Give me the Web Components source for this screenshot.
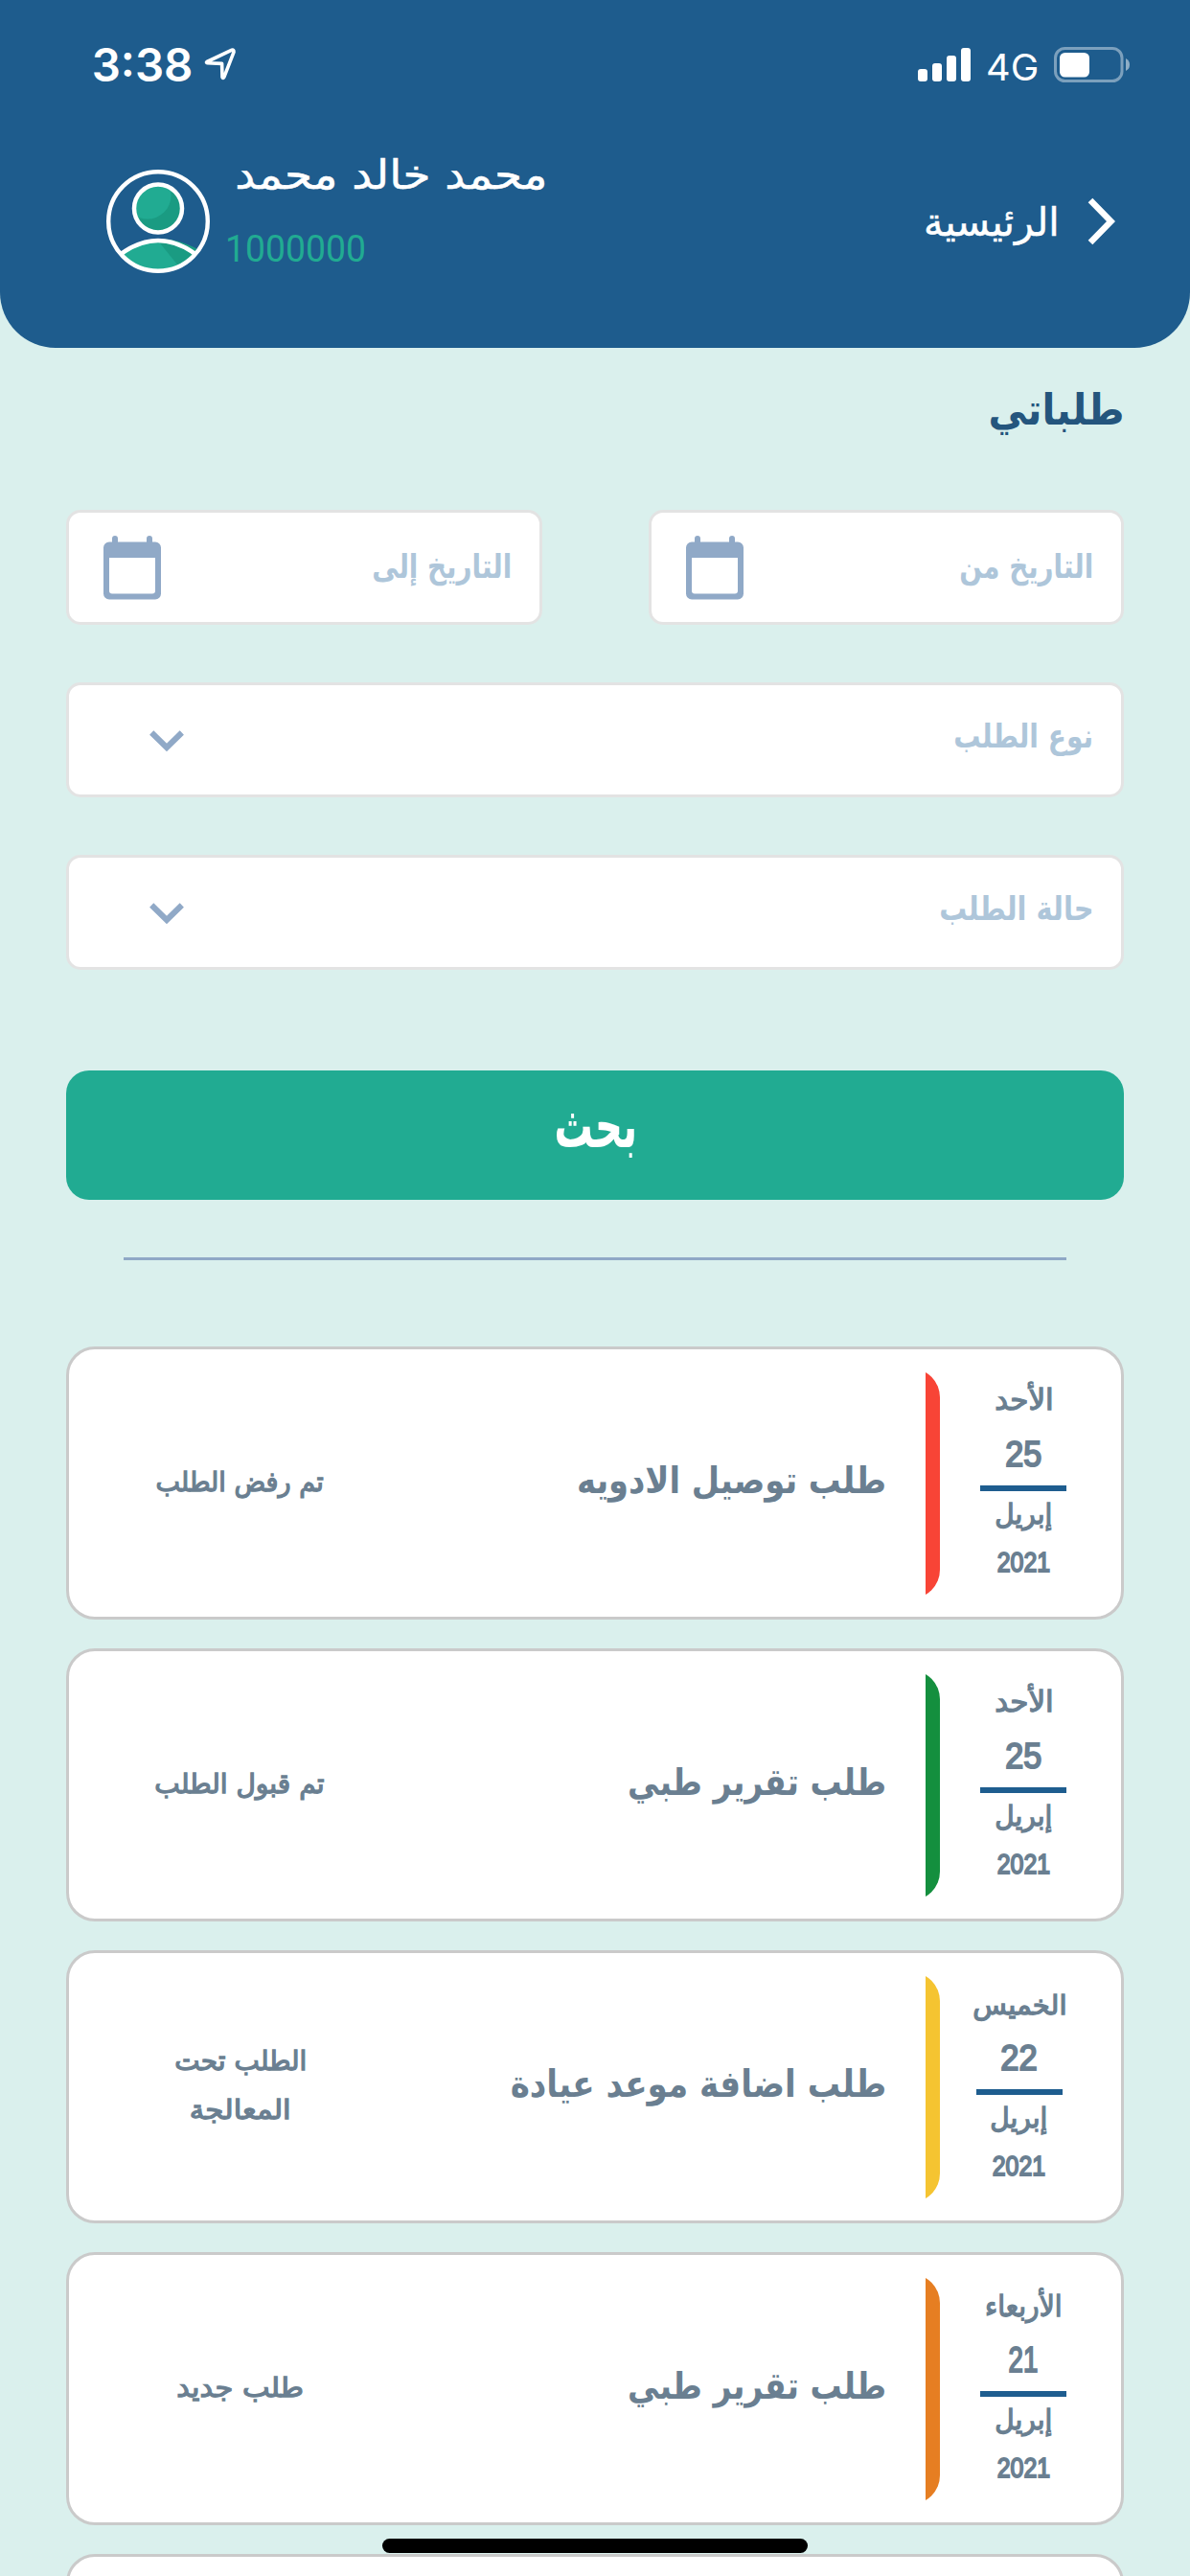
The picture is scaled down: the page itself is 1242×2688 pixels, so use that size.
<!DOCTYPE html>
<html lang="ar">
<head>
<meta charset="utf-8">
<title>طلباتي</title>
<style>
html,body{margin:0;padding:0}
body{width:1242px;height:2688px;overflow:hidden;background:#daf0ed;font-family:"DejaVu Sans","Noto Sans",sans-serif}
</style>
</head>
<body>
<requests-page></requests-page>
<script>
const define=(name,html,setup)=>customElements.define(name,class extends HTMLElement{
  connectedCallback(){
    if(this.shadowRoot)return;
    this.attachShadow({mode:'open'}).innerHTML=typeof html==='function'?html(this):html;
    if(setup)setup(this);
  }
});

/* One line of text whose ink fills w by h pixels; the box ends at the baseline. */
const ctx=document.createElement('canvas').getContext('2d');
define('fit-text',el=>{
  const g=(n,d)=>el.getAttribute(n)||d;
  const w=+g('w'),h=+g('h'),t=g('text'),wt=g('weight','400'),st=g('stroke','0');
  const fam=g('family','"DejaVu Sans","Noto Sans",sans-serif');
  ctx.direction='ltr';ctx.textAlign='left';
  ctx.font=`${wt} 100px ${fam}`;
  const m=ctx.measureText(t);
  const size=100*h/m.actualBoundingBoxAscent,k=size/100;
  const ink=(m.actualBoundingBoxLeft+m.actualBoundingBoxRight)*k,s=w/ink;
  return `<style>:host{display:block;flex:none;width:${w}px;height:${h}px}svg{display:block;overflow:visible}
  text{font:${wt} ${size}px ${fam.replace(/"/g,"'")};fill:currentColor;stroke:currentColor;stroke-width:${st};direction:ltr}</style>
  <svg width="${w}" height="${h}"><text transform="translate(${m.actualBoundingBoxLeft*k*s} ${h}) scale(${s} 1)">${t}</text></svg>`;
});

define('status-bar',`<style>
:host{display:flex;justify-content:space-between;align-items:flex-start;height:120px;padding:0 62px 0 98px;box-sizing:border-box;color:#fff}
.l,.r{display:flex;align-items:flex-start}
svg{display:block;overflow:visible}
</style>
<div class="l"><fit-text text="3:38" w="101" h="35" weight="600" family='Inter,sans-serif' style="margin:50px 15px 0 0"></fit-text>
<svg width="32" height="34" viewBox="0 0 32 34" style="margin-top:50px"><path d="M2 14.5 28 2.2Q30.2 1.5 30 4.3L20 30.2Q18.8 32.5 18 30.5L17.6 16.4 2.4 15.8Q.8 15.4 2 14.5Z" fill="none" stroke="#fff" stroke-width="3.6" stroke-linejoin="round"/></svg></div>
<div class="r">
<svg width="56" height="36" style="margin:50px 17px 0 0" fill="#fff"><rect y="22" width="10" height="13" rx="3"/><rect x="15" y="16" width="10" height="19" rx="3"/><rect x="30" y="8" width="10" height="27" rx="3"/><rect x="45" width="10" height="35" rx="3"/></svg>
<fit-text text="4G" w="51" h="28.5" family="Inter,sans-serif" weight="400" style="margin:55px 18px 0 0"></fit-text>
<svg width="80" height="38" style="margin-top:49px"><rect x="1.5" y="1.5" width="69.5" height="34" rx="10" fill="none" stroke="#fff" stroke-opacity=".42" stroke-width="3"/><rect x="6" y="6" width="31" height="25.500" rx="5.500" fill="#fff"/><path d="M75 12Q79 14 79 18.500T75 25Z" fill="#fff" fill-opacity=".5"/></svg>
</div>`);

define('user-avatar',`<style>:host{display:block;flex:none;width:108px;height:108px}svg{display:block}</style>
<svg width="108" height="108" viewBox="0 0 108 108"><defs><clipPath id="h"><circle cx="54" cy="40.500" r="23"/></clipPath><clipPath id="o"><circle cx="54" cy="54" r="51"/></clipPath></defs>
<g clip-path="url(#o)"><path d="M10 92Q54 53 98 92V110H10Z" fill="#21ab92"/><path d="M53 73 78 104 110 92Q76 69 53 73Z" fill="#1a9b82"/><path d="M10 92Q54 56 98 92" fill="none" stroke="#fff" stroke-width="4.500"/></g>
<circle cx="54" cy="40.500" r="25" fill="#1a9b82"/><circle cx="43" cy="27" r="24.500" fill="#21ab92" clip-path="url(#h)"/>
<circle cx="54" cy="40.500" r="25" fill="none" stroke="#fff" stroke-width="4.500"/><circle cx="54" cy="54" r="51.800" fill="none" stroke="#fff" stroke-width="4.400"/></svg>`);

define('app-header',`<style>
:host{display:block;height:363px;background:#1e5c8d;border-radius:0 0 58px 58px;color:#fff}
.row{display:flex;justify-content:space-between;align-items:flex-start;padding:0 78px 0 111px}
.user,.back{display:flex;align-items:flex-start}
.names{display:flex;flex-direction:column}
</style>
<status-bar></status-bar>
<div class="row"><div class="user"><user-avatar style="margin-top:57px"></user-avatar>
<div class="names"><fit-text text="محمد خالد محمد" w="320" h="32" stroke=".5" style="margin:45px 0 0 29px"></fit-text>
<fit-text text="1000000" w="142" h="28.500" family="Roboto,sans-serif" weight="400" style="margin:46.500px 0 0 19px;color:#21ab92"></fit-text></div></div>
<div class="back"><fit-text text="الرئيسية" w="135" h="31" stroke=".5" style="margin:95px 33px 0 0"></fit-text>
<svg width="29" height="50" style="margin-top:86px"><path d="M3 3 24.500 25 3 47" fill="none" stroke="#fff" stroke-width="6.500"/></svg></div></div>`);

define('field-box',el=>{
  const cal=el.getAttribute('icon')==='calendar';
  return `<style>:host{display:flex;justify-content:space-between;align-items:flex-start;box-sizing:border-box;height:120px;border:3px solid #e3e3e3;border-radius:15px;background:#fff;color:#aec6da;padding:0 31px 0 ${cal?36:84}px}svg{display:block;flex:none}</style>
  ${cal?`<svg width="60" height="67" viewBox="0 0 60 67" fill="#90a9c7" style="margin-top:24px"><path fill-rule="evenodd" d="M6 6.500H9V3a3 3 0 0 1 6 0V6.500H45V3a3 3 0 0 1 6 0V6.500H54a6 6 0 0 1 6 6V60.500a6 6 0 0 1-6 6H6a6 6 0 0 1-6-6V12.500a6 6 0 0 1 6-6ZM6 23V57.500a3 3 0 0 0 3 3H51a3 3 0 0 0 3-3V23Z"/></svg>`
  :`<svg width="36" height="23" style="margin-top:47px"><path d="M2.200 2.500 18 18 33.800 2.500" fill="none" stroke="#90a9c7" stroke-width="6"/></svg>`}
  <fit-text text="${el.getAttribute('label')}" w="${el.getAttribute('w')}" h="26.500" weight="700" style="margin-top:${cal?40.5:37.5}px"></fit-text>`;
});

define('search-button',`<style>:host{display:flex;justify-content:center;height:135px;border-radius:24px;background:#21ab92;color:#fff}</style>
<fit-text text="بحث" w="81" h="35" weight="700" style="margin-top:44.500px"></fit-text>`);

define('date-column',el=>{
  const g=n=>el.getAttribute(n);
  return `<style>:host{display:flex;flex-direction:column;align-items:center;flex:none;width:${g('span')||174}px}
  .day{height:63px;display:flex;align-items:flex-end}.line{width:90px;height:6px;background:#1e5d8f;margin:20px 0 12px}</style>
  <div class="day"><fit-text text="${g('day')}" w="${g('dw')}" h="${g('dh')}" weight="400" stroke="1.300"></fit-text></div>
  <fit-text text="${g('num')}" w="${g('nw')}" h="25.500" family='"Liberation Sans",sans-serif' stroke="2" style="margin-top:32.500px;margin-bottom:.500px"></fit-text>
  <div class="line"></div>
  <fit-text text="إبريل" w="57" h="22" stroke="1.300"></fit-text>
  <fit-text text="2021" w="53" h="21" family='"Liberation Sans",sans-serif' stroke="1.900" style="margin-top:29.500px"></fit-text>`;
});

define('request-card',el=>{
  const g=n=>el.getAttribute(n);
  const lines=(g('status')||'').split('|'),ws=(g('sw')||'').split('|');
  return `<style>
  :host{display:flex;box-sizing:border-box;height:285px;flex:none;border:3px solid #cacaca;border-radius:30px;background:#fff;color:#6a7f91}
  .status{width:357px;flex:none;display:flex;flex-direction:column;align-items:center;gap:29.500px;padding-top:${lines.length>1?100:126}px;box-sizing:border-box}
  .title{width:494px;flex:none;display:flex;justify-content:flex-end;padding-top:119.500px;box-sizing:border-box}
  .bar{flex:none;width:15px;height:240px;margin:20px 0 0 43px;overflow:hidden;display:flex;justify-content:flex-end}
  .bar i{flex:none;width:60px;height:240px;border-radius:30px;background:${g('color')}}
  </style>
  ${g('title-text')?`<div class="status">${lines.map((t,i)=>`<fit-text text="${t}" w="${ws[i]}" h="21.500" stroke="1.300"></fit-text>`).join('')}</div>
  <div class="title"><fit-text text="${g('title-text')}" w="${g('tw')}" h="29.500" weight="700"></fit-text></div>
  <div class="bar"><i></i></div>
  <slot></slot>`:''}`;
});

define('home-indicator',`<style>:host{position:absolute;left:399px;top:2649px;width:444px;height:15px;border-radius:8px;background:#000}</style>`);

define('requests-page',`<style>
:host{display:block;width:1242px;height:2688px;overflow:hidden;position:relative}
main{padding:0 69px}
.head{display:flex;justify-content:flex-end;padding:46px 2px 0 0;color:#24557d}
.dates{display:flex;gap:111px;margin-top:89px}.dates>*{flex:1}
.sel{margin-top:60px}
hr{border:0;height:3px;background:#8fa8c6;margin:60px 60px 90px}
.list{display:flex;flex-direction:column;gap:30px}
</style>
<app-header></app-header>
<main>
<div class="head"><fit-text text="طلباتي" w="137" h="34" weight="700"></fit-text></div>
<div class="dates"><field-box icon="calendar" label="التاريخ إلى" w="142"></field-box><field-box icon="calendar" label="التاريخ من" w="136"></field-box></div>
<field-box class="sel" label="نوع الطلب" w="142"></field-box>
<field-box class="sel" label="حالة الطلب" w="157"></field-box>
<search-button style="margin-top:105px"></search-button>
<hr>
<div class="list">
<request-card title-text="طلب توصيل الادويه" tw="319" status="تم رفض الطلب" sw="173" color="#f84436"><date-column day="الأحد" dw="57" dh="29" num="25" nw="35"></date-column></request-card>
<request-card title-text="طلب تقرير طبي" tw="266" status="تم قبول الطلب" sw="175" color="#148f3e"><date-column day="الأحد" dw="57" dh="29" num="25" nw="35"></date-column></request-card>
<request-card title-text="طلب اضافة موعد عيادة" tw="389" status="الطلب تحت|المعالجة" sw="134|101" color="#f5c431"><date-column span="165" day="الخميس" dw="94" dh="21.500" num="22" nw="35"></date-column></request-card>
<request-card title-text="طلب تقرير طبي" tw="266" status="طلب جديد" sw="129" color="#e67e22"><date-column day="الأربعاء" dw="76" dh="29.500" num="21" nw="28"></date-column></request-card>
<request-card></request-card>
</div>
</main>
<home-indicator></home-indicator>`);
</script>
</body>
</html>
